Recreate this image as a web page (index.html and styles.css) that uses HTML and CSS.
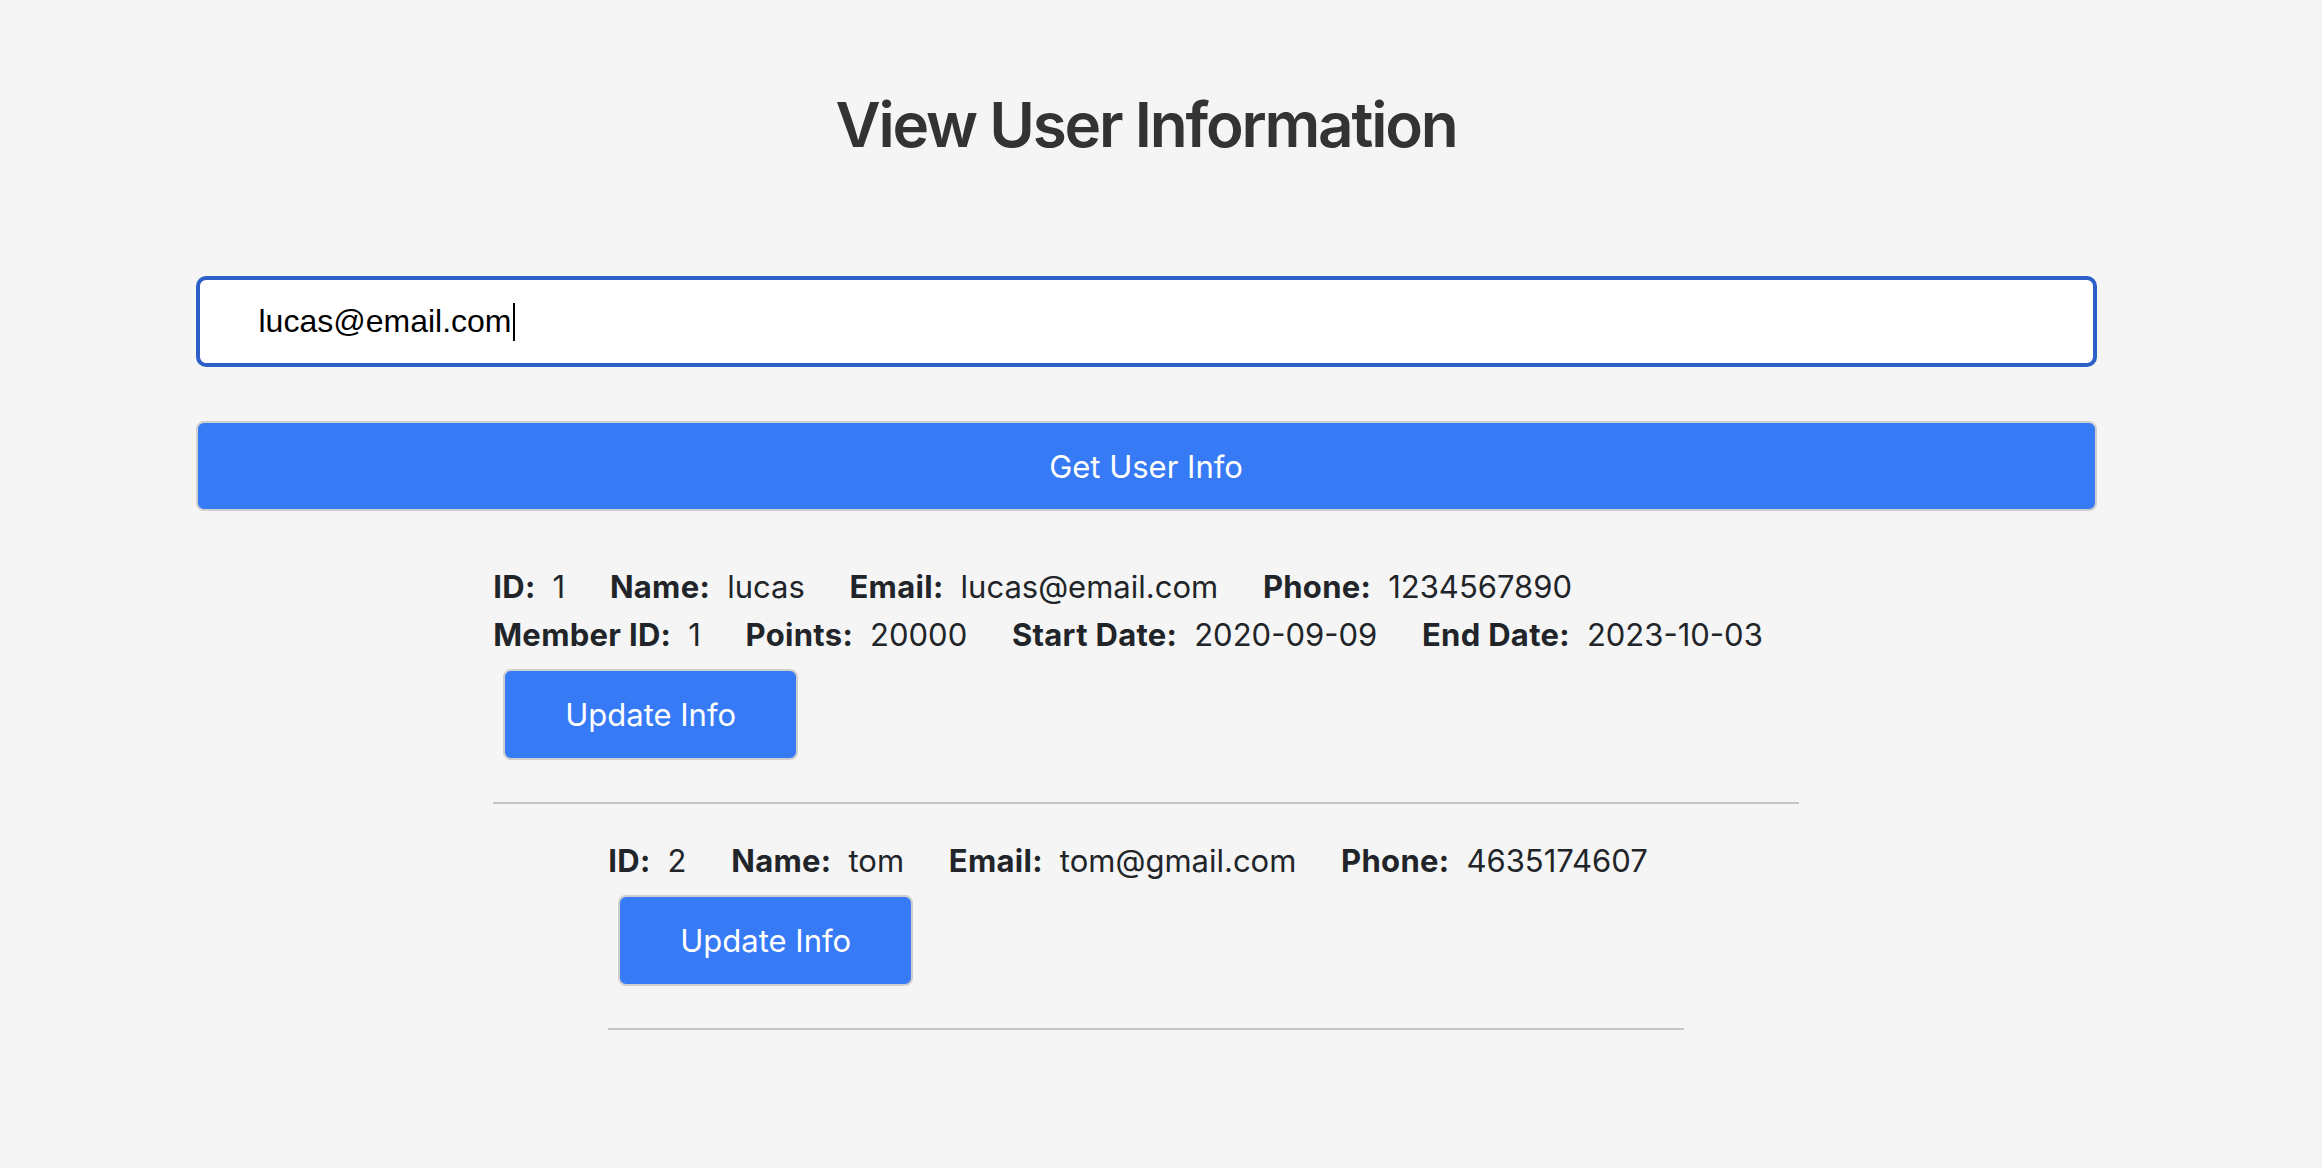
FILE: index.html
```html
<!DOCTYPE html>
<html lang="en">
<head>
<meta charset="utf-8">
<title>View User Information</title>
<link rel="stylesheet" href="styles.css">
</head>
<body>
<main class="page">
  <h1 class="title">View User Information</h1>
  <section class="search">
    <div class="input-wrap">
      <input class="search-input" type="text" value="lucas@email.com">
      <div class="caret-overlay" aria-hidden="true"><span class="ghost">lucas@email.com</span></div>
    </div>
    <button class="primary-btn" type="button">Get User Info</button>
  </section>
  <section class="users">
    <div class="user">
      <div class="row">
        <span class="item"><strong>ID:</strong>1</span>
        <span class="item"><strong>Name:</strong>lucas</span>
        <span class="item"><strong>Email:</strong>lucas@email.com</span>
        <span class="item"><strong>Phone:</strong>1234567890</span>
      </div>
      <div class="row">
        <span class="item"><strong>Member ID:</strong>1</span>
        <span class="item"><strong>Points:</strong>20000</span>
        <span class="item"><strong>Start Date:</strong>2020-09-09</span>
        <span class="item"><strong>End Date:</strong>2023-10-03</span>
      </div>
      <button class="update-btn" type="button">Update Info</button>
      <hr class="divider">
    </div>
    <div class="user">
      <div class="row">
        <span class="item"><strong>ID:</strong>2</span>
        <span class="item"><strong>Name:</strong>tom</span>
        <span class="item"><strong>Email:</strong>tom@gmail.com</span>
        <span class="item"><strong>Phone:</strong>4635174607</span>
      </div>
      <button class="update-btn" type="button">Update Info</button>
      <hr class="divider">
    </div>
  </section>
</main>
</body>
</html>
```

FILE: styles.css
```css
html, body {
  margin: 0;
  padding: 0;
  background: #f5f5f5;
}

body {
  font-family: Inter, "Noto Sans", "Liberation Sans", sans-serif;
  color: #212529;
}

.page {
  width: 2292px;
  display: flex;
  flex-direction: column;
  align-items: center;
}

.title {
  margin: 86px 0 113px;
  font-size: 62px;
  line-height: 77px;
  font-weight: 600;
  color: #333333;
  letter-spacing: -2.2px;
}

.search {
  width: 1901px;
  display: flex;
  flex-direction: column;
}

.input-wrap {
  position: relative;
  height: 91px;
}

.search-input {
  box-sizing: border-box;
  height: 91px;
  width: 100%;
  border: 4px solid #2c60c8;
  border-radius: 10px;
  background: #ffffff;
  padding: 0 0 0 59px;
  font-family: "Liberation Sans", Arial, sans-serif;
  font-size: 32px;
  color: #000000;
  outline: none;
  caret-color: transparent;
}

.caret-overlay {
  position: absolute;
  left: 63px;
  top: 0;
  bottom: 0;
  display: flex;
  align-items: center;
  pointer-events: none;
  font-family: "Liberation Sans", Arial, sans-serif;
  font-size: 32px;
}

.ghost {
  color: transparent;
  display: flex;
  align-items: center;
}

.ghost::after {
  content: "";
  display: block;
  width: 2px;
  height: 38px;
  margin-left: 1px;
  background: #000000;
}

.primary-btn {
  margin-top: 54px;
  box-sizing: border-box;
  height: 90px;
  width: 100%;
  border: 2px solid #cfcfcf;
  border-radius: 8px;
  background: #367af6;
  color: #ffffff;
  font-family: Inter, "Noto Sans", sans-serif;
  font-size: 31px;
  cursor: pointer;
}

.users {
  margin-top: 52px;
  display: flex;
  flex-direction: column;
  align-items: center;
}

.user {
  display: flex;
  flex-direction: column;
  align-items: flex-start;
}

.row {
  font-size: 31px;
  line-height: 48px;
  white-space: nowrap;
}

.item {
  margin-right: 36px;
}

.item strong {
  font-weight: 700;
  margin-right: 17px;
  letter-spacing: 0.3px;
}

.update-btn {
  margin: 10px;
  box-sizing: border-box;
  height: 91px;
  padding: 0 60px;
  border: 2px solid #cfcfcf;
  border-radius: 8px;
  background: #367af6;
  color: #ffffff;
  font-family: Inter, "Noto Sans", sans-serif;
  font-size: 31px;
  cursor: pointer;
}

.divider {
  align-self: stretch;
  margin: 32px 0 33px;
  border: none;
  border-top: 2px solid #c4c4c4;
  height: 0;
}
```
